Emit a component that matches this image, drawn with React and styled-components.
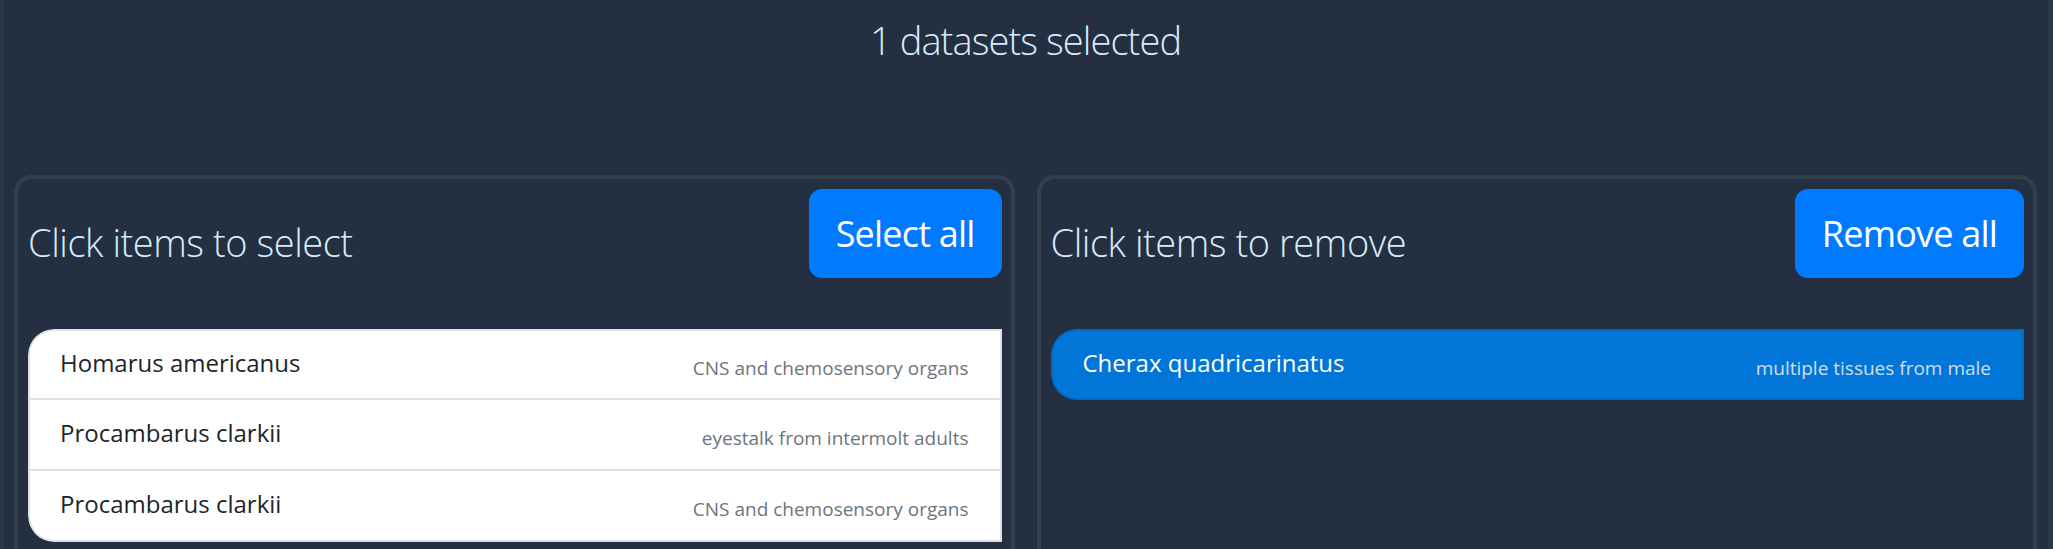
import React, { useState } from "react";
import styled, { createGlobalStyle } from "styled-components";

const GlobalStyle = createGlobalStyle`
  html, body {
    margin: 0;
    padding: 0;
    background: #242f42;
    font-family: "Open Sans", "Noto Sans", "Liberation Sans", sans-serif;
  }
  * {
    box-sizing: border-box;
  }
`;

export default function App() {
  const [available, setAvailable] = useState([
    { id: 1, species: "Homarus americanus", tissue: "CNS and chemosensory organs" },
    { id: 2, species: "Procambarus clarkii", tissue: "eyestalk from intermolt adults" },
    { id: 3, species: "Procambarus clarkii", tissue: "CNS and chemosensory organs" },
  ]);
  const [selected, setSelected] = useState([
    { id: 4, species: "Cherax quadricarinatus", tissue: "multiple tissues from male" },
  ]);

  const selectItem = (id) => {
    const item = available.find((d) => d.id === id);
    setAvailable(available.filter((d) => d.id !== id));
    setSelected([...selected, item]);
  };

  const removeItem = (id) => {
    const item = selected.find((d) => d.id === id);
    setSelected(selected.filter((d) => d.id !== id));
    setAvailable([...available, item]);
  };

  const selectAll = () => {
    setSelected([...selected, ...available]);
    setAvailable([]);
  };

  const removeAll = () => {
    setAvailable([...available, ...selected]);
    setSelected([]);
  };

  return (
    <>
      <GlobalStyle />
      <Page>
        <Heading>{selected.length} datasets selected</Heading>
        <Columns>
          <Panel>
            <PanelHeader>
              <PanelTitle>Click items to select</PanelTitle>
              <ActionButton onClick={selectAll}>Select all</ActionButton>
            </PanelHeader>
            <List>
              {available.map((d) => (
                <ListItem key={d.id} onClick={() => selectItem(d.id)}>
                  <Species>{d.species}</Species>
                  <Tissue>{d.tissue}</Tissue>
                </ListItem>
              ))}
            </List>
          </Panel>
          <Panel>
            <PanelHeader>
              <PanelTitle>Click items to remove</PanelTitle>
              <ActionButton onClick={removeAll}>Remove all</ActionButton>
            </PanelHeader>
            <List>
              {selected.map((d) => (
                <ListItem key={d.id} $active onClick={() => removeItem(d.id)}>
                  <Species>{d.species}</Species>
                  <Tissue $active>{d.tissue}</Tissue>
                </ListItem>
              ))}
            </List>
          </Panel>
        </Columns>
      </Page>
    </>
  );
}

const Page = styled.div`
  min-height: 100vh;
  border-left: 4px solid #2b3848;
  border-right: 5px solid #2b3848;
  padding: 16px 11px 0 10px;
`;

const Heading = styled.h1`
  margin: 0;
  text-align: center;
  font-size: 38px;
  line-height: 48px;
  font-weight: 300;
  letter-spacing: -0.9px;
  color: #d7ebfa;
`;

const Columns = styled.div`
  display: grid;
  grid-template-columns: 1fr 1fr;
  gap: 22px;
  margin-top: 111px;
`;

const Panel = styled.section`
  border: 4px solid #343f4d;
  border-radius: 18px;
  padding: 10px 9px 10px 10px;
  min-height: 420px;
`;

const PanelHeader = styled.div`
  display: flex;
  align-items: center;
  justify-content: space-between;
`;

const PanelTitle = styled.h2`
  margin: 16px 0 0;
  font-size: 38px;
  line-height: 48px;
  font-weight: 300;
  letter-spacing: -0.45px;
  color: #d7ebfa;
`;

const ActionButton = styled.button`
  height: 89px;
  padding: 0 27px;
  border: none;
  border-radius: 13px;
  background: #007bff;
  color: #fff;
  font-family: inherit;
  font-size: 36px;
  font-weight: 400;
  letter-spacing: -0.8px;
  cursor: pointer;
`;

const List = styled.ul`
  list-style: none;
  margin: 51px 0 0;
  padding: 0;
  border-radius: 26px 0 0 26px;
  overflow: hidden;
`;

const ListItem = styled.li`
  display: flex;
  align-items: center;
  justify-content: space-between;
  height: 71px;
  padding: 0 31px 0 30px;
  background: ${(p) => (p.$active ? "#0275d8" : "#fff")};
  color: ${(p) => (p.$active ? "#fff" : "#212529")};
  border: 2px solid ${(p) => (p.$active ? "#006ac4" : "#dee2e6")};
  cursor: pointer;
  &:first-child {
    border-top-left-radius: 26px;
  }
  &:last-child {
    border-bottom-left-radius: 26px;
  }
  & + & {
    border-top: none;
  }
`;

const Species = styled.span`
  font-size: 24px;
  margin-top: -4px;
`;

const Tissue = styled.small`
  font-size: 19px;
  margin-top: 6px;
  color: ${(p) => (p.$active ? "#d3deea" : "#6c757d")};
`;
